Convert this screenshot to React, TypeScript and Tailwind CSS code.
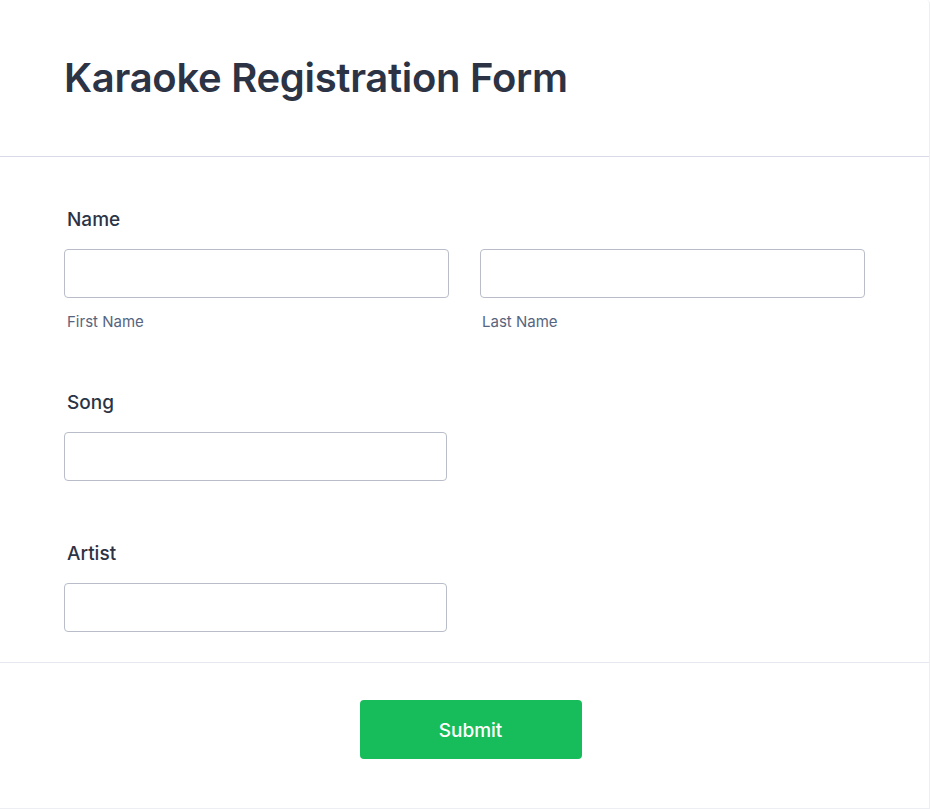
import React from "react";

function Field({ label, children }: { label: string; children: React.ReactNode }) {
  return (
    <div className="flex flex-col">
      <div className="pl-[3px] text-[19px] font-medium leading-[24px] text-[#2c3345]">{label}</div>
      <div className="mt-[17px]">{children}</div>
    </div>
  );
}

function Input({ className = "" }: { className?: string }) {
  return (
    <input
      type="text"
      className={`h-[49px] rounded-[4px] border border-[#b8bdc9] bg-white outline-none ${className}`}
    />
  );
}

export default function App() {
  return (
    <div
      className="min-h-[809px] w-[930px] bg-white"
      style={{ fontFamily: "Inter, 'Noto Sans', sans-serif" }}
    >
      <div className="h-[809px] w-[930px] rounded-tr-[4px] border-r border-b border-[#eceef3] bg-white flex flex-col">
        <header className="h-[157px] border-b border-[#d8dae9] px-[64px] pt-[53px]">
          <h1 className="text-[40px] font-semibold leading-[50px] tracking-[-0.3px] text-[#2c3345]">
            Karaoke Registration Form
          </h1>
        </header>

        <div className="flex flex-col px-[64px] pt-[51px]">
          <Field label="Name">
            <div className="flex gap-[31px]">
              <div className="flex w-[385px] flex-col">
                <Input className="w-[385px]" />
                <div className="mt-[15px] pl-[3px] text-[15px] leading-[18px] text-[#57647e]">First Name</div>
              </div>
              <div className="flex w-[385px] flex-col">
                <Input className="w-[385px]" />
                <div className="mt-[15px] pl-[2px] text-[15px] leading-[18px] text-[#57647e]">Last Name</div>
              </div>
            </div>
          </Field>

          <div className="mt-[60px]">
            <Field label="Song">
              <Input className="w-[383px]" />
            </Field>
          </div>

          <div className="mt-[61px]">
            <Field label="Artist">
              <Input className="w-[383px]" />
            </Field>
          </div>
        </div>

        <div className="mt-[30px] border-t border-[#e6e8ef] flex justify-center pt-[37px] pl-[12px]">
          <button className="h-[59px] w-[222px] rounded-[4px] bg-[#18bd5b] pt-[3px] text-[19px] font-medium text-white">
            Submit
          </button>
        </div>
      </div>
    </div>
  );
}
